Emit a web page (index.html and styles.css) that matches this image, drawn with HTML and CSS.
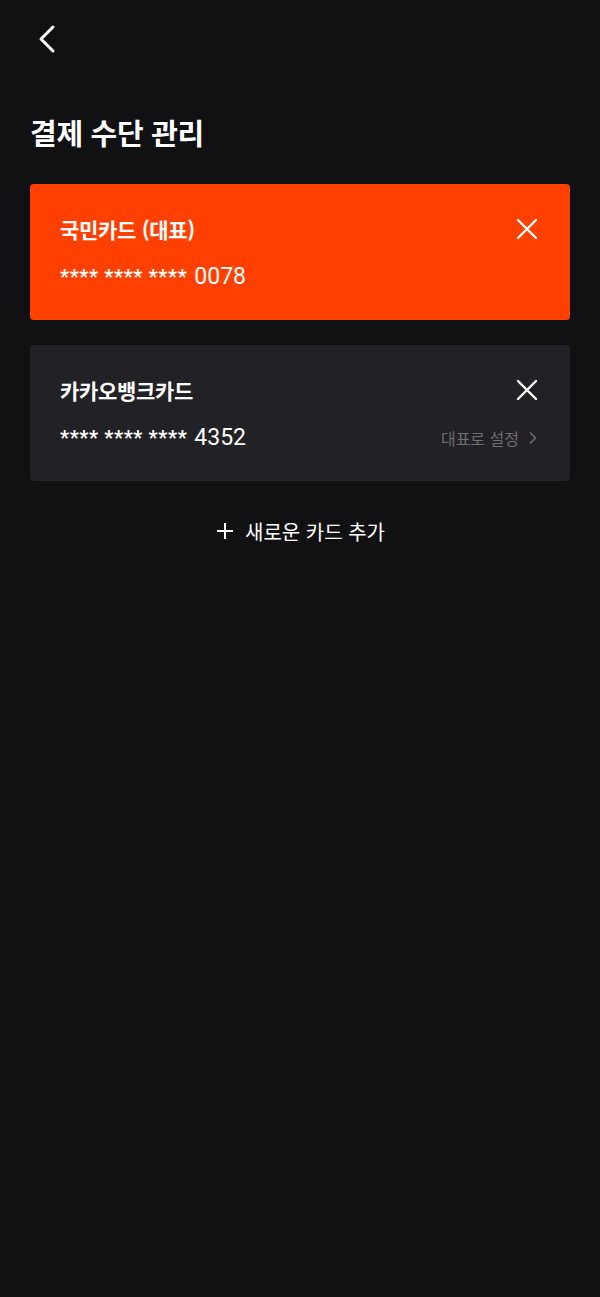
FILE: index.html
```html
<!DOCTYPE html>
<html lang="ko">
<head>
    <meta charset="UTF-8">
    <meta name="viewport" content="width=device-width, initial-scale=1.0">
    <title>결제 수단 관리</title>
    <link rel="stylesheet" href="styles.css">
</head>
<body>
    <div class="page">
        <div class="topbar">
            <button class="back-btn" aria-label="뒤로">
                <svg width="22" height="30" viewBox="0 0 22 30">
                    <path d="M17 3 L5 15 L17 27" fill="none" stroke="#fff" stroke-width="3" stroke-linecap="round" stroke-linejoin="round"/>
                </svg>
            </button>
        </div>

        <h1 class="title">결제 수단 관리</h1>

        <div class="card-list">
            <div class="card card-main">
                <div class="card-head">
                    <span class="card-name">국민카드 (대표)</span>
                    <button class="close-btn" aria-label="삭제">
                        <svg width="22" height="22" viewBox="0 0 22 22">
                            <path d="M2 2 L20 20 M20 2 L2 20" stroke="#fff" stroke-width="2.4" stroke-linecap="round"/>
                        </svg>
                    </button>
                </div>
                <div class="card-foot">
                    <span class="card-number"><span class="mask">**** **** ****</span> 0078</span>
                </div>
            </div>

            <div class="card">
                <div class="card-head">
                    <span class="card-name">카카오뱅크카드</span>
                    <button class="close-btn" aria-label="삭제">
                        <svg width="22" height="22" viewBox="0 0 22 22">
                            <path d="M2 2 L20 20 M20 2 L2 20" stroke="#fff" stroke-width="2.4" stroke-linecap="round"/>
                        </svg>
                    </button>
                </div>
                <div class="card-foot">
                    <span class="card-number"><span class="mask">**** **** ****</span> 4352</span>
                    <a class="set-main" href="#">대표로 설정
                        <svg width="10" height="14" viewBox="0 0 10 14">
                            <path d="M2.5 2 L7.5 7 L2.5 12" fill="none" stroke="#6f6e73" stroke-width="1.6" stroke-linecap="round" stroke-linejoin="round"/>
                        </svg>
                    </a>
                </div>
            </div>
        </div>

        <button class="add-btn">
            <svg width="20" height="20" viewBox="0 0 20 20">
                <path d="M10 2 V18 M2 10 H18" stroke="#fff" stroke-width="2"/>
            </svg>
            새로운 카드 추가
        </button>
    </div>
</body>
</html>
```

FILE: styles.css
```css
* {
    margin: 0;
    padding: 0;
    box-sizing: border-box;
    font-family: "Noto Sans CJK KR", "Noto Sans", sans-serif;
}

html, body {
    background: #111013;
    color: #fff;
    min-height: 100%;
}

.page {
    padding: 0 30px;
}

button {
    background: none;
    border: none;
    cursor: pointer;
    color: inherit;
}

.topbar {
    height: 78px;
    display: flex;
    align-items: center;
}

.back-btn {
    display: flex;
    margin-left: 6px;
}

.title {
    font-size: 29px;
    font-weight: 700;
    line-height: 40px;
    margin-top: 34px;
    margin-bottom: 32px;
    letter-spacing: -0.3px;
}

.card-list {
    display: flex;
    flex-direction: column;
    gap: 25px;
}

.card {
    background: #222125;
    border-radius: 4px;
    height: 136px;
    padding: 30px 30px 0 30px;
}

.card-main {
    background: #ff4000;
}

.card-head {
    display: flex;
    justify-content: space-between;
    align-items: center;
    height: 30px;
}

.card-name {
    font-size: 21px;
    font-weight: 700;
    letter-spacing: -0.3px;
}

.close-btn {
    display: flex;
    margin-right: 2px;
}

.card-foot {
    display: flex;
    justify-content: space-between;
    align-items: center;
    margin-top: 16px;
    height: 32px;
}

.card-number {
    font-size: 23px;
    font-family: "Roboto", sans-serif;
    display: flex;
    align-items: baseline;
    gap: 7px;
}

.mask {
    font-size: 20px;
    font-weight: 700;
    letter-spacing: 0.6px;
    font-family: "Roboto", sans-serif;
}

.set-main {
    color: #6f6e73;
    font-size: 16px;
    text-decoration: none;
    display: flex;
    align-items: center;
    gap: 9px;
    margin-right: 2px;
    margin-top: 1px;
}

.add-btn {
    display: flex;
    align-items: center;
    justify-content: center;
    gap: 10px;
    width: 100%;
    margin-top: 34px;
    font-size: 20px;
    height: 32px;
    font-family: "Noto Sans CJK KR", sans-serif;
}
```
